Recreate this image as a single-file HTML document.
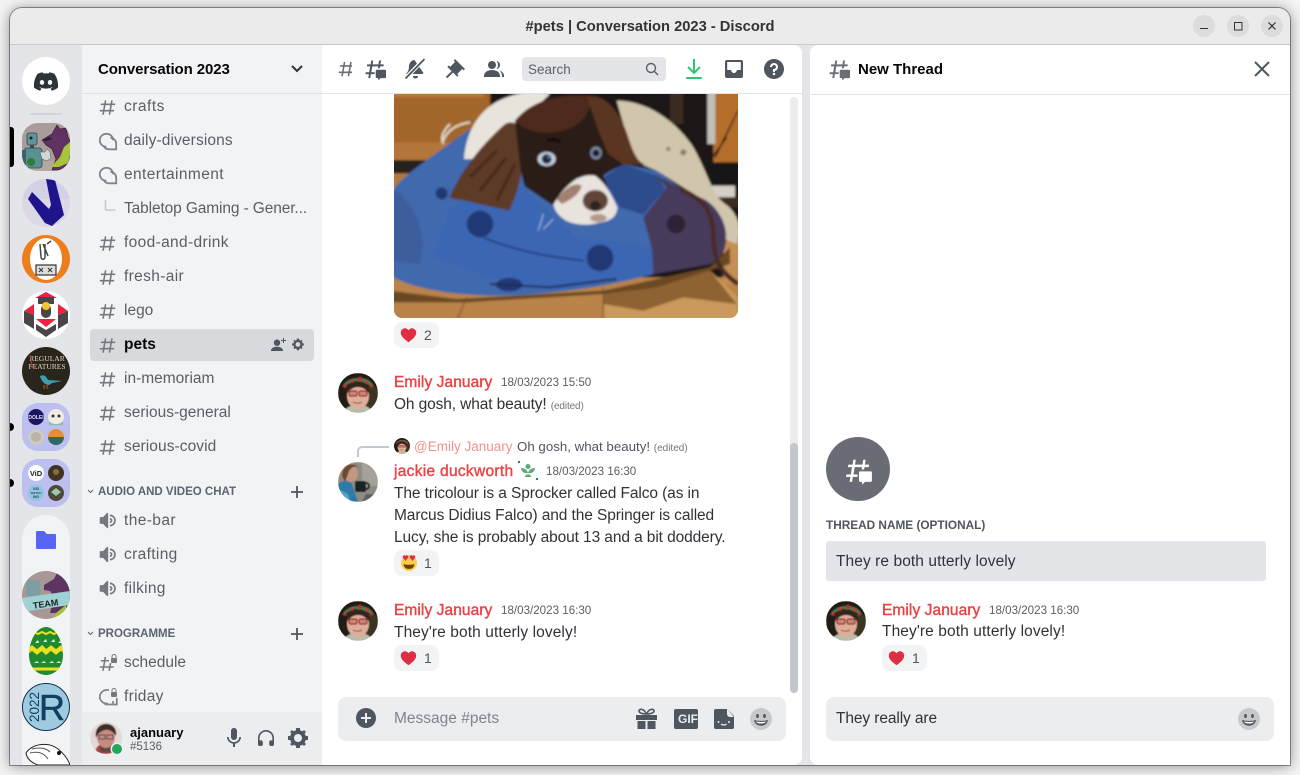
<!DOCTYPE html>
<html lang="en"><head><meta charset="utf-8"><title>#pets | Conversation 2023 - Discord</title>
<style>
html,body{margin:0;padding:0;width:1300px;height:775px;overflow:hidden;background:#f4f4f4;font-family:"Liberation Sans",sans-serif}
#win{position:absolute;left:10px;top:8px;width:1280px;height:757px;border-radius:12px 12px 0 0;box-shadow:0 1px 14px rgba(0,0,0,.45),0 0 0 1px #9a9a9a;background:#e3e5e8}
#g{position:absolute;left:0;top:0}
.t{position:absolute;white-space:nowrap;line-height:20px;height:20px;margin-top:1px}
.c{font-size:15.5px;color:#5c5e66;left:124px}
.cat{font-size:11.5px;font-weight:bold;color:#5c6470;left:98px}
.n{font-size:15.5px;color:#ed4245;-webkit-text-stroke:.4px #ed4245;letter-spacing:.08px}
.d{font-size:11.6px;color:#5c5e66}
.m{font-size:15.5px;color:#2e3338}
.e{font-size:10px;color:#72767d}
.r{font-size:14px;color:#4f5660}
</style></head><body>
<div id="win"></div>
<svg id="g" width="1300" height="775" viewBox="0 0 1300 775" xmlns="http://www.w3.org/2000/svg">
<defs>
<clipPath id="w"><path d="M10 20a12 12 0 0 1 12-12h1256a12 12 0 0 1 12 12v745H10z"/></clipPath>
<clipPath id="cc"><circle cx="20" cy="20" r="20"/></clipPath>
<clipPath id="sc"><circle cx="24" cy="24" r="24"/></clipPath>
<clipPath id="sq"><rect width="48" height="48" rx="16"/></clipPath>
<clipPath id="img"><path d="M394 94h344v216a8 8 0 0 1-8 8H402a8 8 0 0 1-8-8z"/></clipPath>
<filter id="b1" x="-5%" y="-5%" width="110%" height="110%"><feGaussianBlur stdDeviation="3.5"/></filter>
<filter id="b3"><feGaussianBlur stdDeviation=".45"/></filter>
<path id="hash" d="M5.88657 21C5.57547 21 5.3399 20.7189 5.39427 20.4126L6.00001 17H2.59511C2.28449 17 2.04905 16.7198 2.10259 16.4138L2.27759 15.4138C2.31946 15.1746 2.52722 15 2.77011 15H6.35001L7.41001 9H4.00511C3.69449 9 3.45905 8.71977 3.51259 8.41381L3.68759 7.41381C3.72946 7.17456 3.93722 7 4.18011 7H7.76001L8.39677 3.41262C8.43914 3.17391 8.64664 3 8.88907 3H9.87344C10.1845 3 10.4201 3.28107 10.3657 3.58738L9.76001 7H15.76L16.3968 3.41262C16.4391 3.17391 16.6466 3 16.8891 3H17.8734C18.1845 3 18.4201 3.28107 18.3657 3.58738L17.76 7H21.1649C21.4755 7 21.711 7.28023 21.6574 7.58619L21.4824 8.58619C21.4406 8.82544 21.2328 9 20.9899 9H17.41L16.35 15H19.7549C20.0655 15 20.301 15.2802 20.2474 15.5862L20.0724 16.5862C20.0306 16.8254 19.8228 17 19.5799 17H16L15.3632 20.5874C15.3209 20.8261 15.1134 21 14.8709 21H13.8866C13.5755 21 13.3399 20.7189 13.3943 20.4126L14 17H8.00001L7.36325 20.5874C7.32088 20.8261 7.11337 21 6.87094 21H5.88657ZM9.41045 9L8.35045 15H14.3504L15.4104 9H9.41045Z"/>
<path id="spk" d="M11.383 3.07904C11.009 2.92504 10.579 3.01004 10.293 3.29604L6 8.00204H3C2.45 8.00204 2 8.45304 2 9.00204V15.002C2 15.552 2.45 16.002 3 16.002H6L10.293 20.71C10.579 20.996 11.009 21.082 11.383 20.927C11.757 20.772 12 20.407 12 20.002V4.00204C12 3.59904 11.757 3.23204 11.383 3.07904ZM14 5.00195V7.00195C16.757 7.00195 19 9.24595 19 12.002C19 14.759 16.757 17.002 14 17.002V19.002C17.86 19.002 21 15.863 21 12.002C21 8.14295 17.86 5.00195 14 5.00195ZM14 9.00195C15.654 9.00195 17 10.349 17 12.002C17 13.657 15.654 15.002 14 15.002V13.002C14.551 13.002 15 12.553 15 12.002C15 11.451 14.551 11.002 14 11.002V9.00195Z"/>
<path id="gear" fill-rule="evenodd" d="M19.738 10H22V14H19.739C19.498 14.931 19.1 15.798 18.565 16.564L20 18L18 20L16.565 18.564C15.797 19.099 14.932 19.498 14 19.738V22H10V19.738C9.069 19.498 8.203 19.099 7.436 18.564L6 20L4 18L5.436 16.564C4.901 15.799 4.502 14.932 4.262 14H2V10H4.262C4.502 9.068 4.9 8.202 5.436 7.436L4 6L6 4L7.436 5.436C8.202 4.9 9.068 4.502 10 4.262V2H14V4.261C14.932 4.502 15.797 4.9 16.565 5.435L18 3.999L20 5.999L18.564 7.436C19.099 8.202 19.498 9.069 19.738 10ZM12 16C14.2091 16 16 14.2091 16 12C16 9.79086 14.2091 8 12 8C9.79086 8 8 9.79086 8 12C8 14.2091 9.79086 16 12 16Z"/>
<g id="bub" fill="none" stroke="#80848e" stroke-width="1.8"><path d="M8.500 15.800C4.800 15.800 1.800 12.900 1.800 9.200S4.800 2.800 8.500 2.800 15 5.500 15 9.200"/><path d="M12.500 6.800c3.500.2 5.700 3 5.700 6.200v5.300h-7c-2.500 0-4.500-1.200-5.400-3.200"/></g>
<g id="threadh"><path d="M5.4 21l.6-4H2.400l.4-2h3.500l1-6H4l.300-2h3.500l.6-4h2l-.6 4h6l.6-4h2l-.6 4h3.400l-.3 2h-3.400l-.4 2h-2l.4-2h-6l-1 6h3.600l-.4 2H8l-.6 4z"/><path d="M14 12.500h8.500a1 1 0 0 1 1 1v6.500a1 1 0 0 1-1 1h-4.500l-2.500 2.300v-2.300H14a1 1 0 0 1-1-1v-6.500a1 1 0 0 1 1-1z"/></g>
<g id="heart"><path d="M8.500 15.200C3.500 11.500.8 9 .8 5.600.8 3 2.800 1.200 5 1.200c1.500 0 2.700.8 3.500 2.100C9.300 2 10.500 1.200 12 1.200c2.200 0 4.200 1.800 4.200 4.400 0 3.400-2.700 5.900-7.700 9.600z" fill="#dd2e44"/></g>
<g id="smile"><circle cx="11" cy="11" r="11" fill="#c8c9cb"/><ellipse cx="7.500" cy="8" rx="1.400" ry="2" fill="#4f5660"/><ellipse cx="14.500" cy="8" rx="1.400" ry="2" fill="#4f5660"/><path d="M4 11.800c2 1.500 12 1.500 14 0-.4 4-3.500 6-7 6s-6.600-2-7-6z" fill="#4f5660"/><path d="M6 13.500c2 .6 8 .6 10 0-.5 1.300-2 2-5 2s-4.500-.7-5-2z" fill="#fff"/></g>
<g id="emily"><g clip-path="url(#cc)"><g filter="url(#b3)"><rect width="40" height="40" fill="#231c12"/><path d="M28 14h12v26H28z" fill="#3a3420"/><path d="M6 40c1-6 7-8 14-8s13 2 14 8z" fill="#b9bca8"/><ellipse cx="20" cy="23" rx="11" ry="13" fill="#dfae9a"/><path d="M8 22c0-10 5-14 12-14s12 4 12 14c-3-5-7-8-12-8s-9 3-12 8z" fill="#33271a"/><path d="M4 14C8 7 14 5 21 5s13 3 15 9l-5-2-6-3-8-1-7 3z" fill="#477a4d"/><circle cx="7" cy="13" r="1.800" fill="#b92d35"/><circle cx="14" cy="8" r="1.800" fill="#c43340"/><circle cx="22" cy="6" r="2.200" fill="#b92d35"/><circle cx="29" cy="9" r="1.800" fill="#c43340"/><circle cx="33" cy="13" r="1.600" fill="#b92d35"/><rect x="11" y="18" width="8" height="5" rx="1.500" fill="#c48a7a" stroke="#a01f24" stroke-width="1.200"/><rect x="21" y="18" width="8" height="5" rx="1.500" fill="#c48a7a" stroke="#a01f24" stroke-width="1.200"/><path d="M15 29c2 1.500 7 1.500 9 0" stroke="#a85a50" stroke-width="1.200" fill="none"/></g></g></g>
<g id="jackie"><g clip-path="url(#cc)"><g filter="url(#b3)"><rect width="40" height="40" fill="#8d8c84"/><path d="M24 0h16v24H24z" fill="#a3a199"/><path d="M0 0h16v14H0z" fill="#aa8a70"/><path d="M0 22c4-4 12-4 14 0l6 18H0z" fill="#2e7aa8"/><path d="M2 28l8 4 2 8H2z" fill="#55a5c5"/><ellipse cx="13" cy="12" rx="7" ry="8" fill="#c5977f"/><path d="M4 14C4 4 12 0 20 4c-5 0-9 3-10 8l-3 8z" fill="#6a4a35"/><rect x="17" y="19" width="11" height="11" rx="2" fill="#1f2024"/><path d="M28 21c4 0 4 6 0 6" stroke="#1f2024" stroke-width="2" fill="none"/><path d="M28 32h12v8H24z" fill="#5f6066"/></g></g></g>
</defs>
<g clip-path="url(#w)">
<rect x="10" y="8" width="1280" height="36" fill="#ebebeb"/>
<rect x="10" y="44" width="1280" height="1" fill="#c8c8c8"/>
<rect x="10" y="45" width="72" height="720" fill="#e3e5e8"/>
<rect x="82" y="45" width="240" height="720" fill="#f2f3f5"/>
<rect x="82" y="712" width="240" height="53" fill="#ebedef"/>
<path d="M322 45h472a8 8 0 0 1 8 8v704a8 8 0 0 1-8 8H322z" fill="#fff"/>
<path d="M818 45h472v720H818a8 8 0 0 1-8-8V53a8 8 0 0 1 8-8z" fill="#fff"/>
<rect x="82" y="93" width="720" height="1" fill="#e1e2e5"/>
<rect x="810" y="94" width="480" height="1" fill="#e1e2e5"/>
<rect x="6" y="127" width="8" height="40" rx="3" fill="#000"/>
<circle cx="10" cy="427" r="4" fill="#000"/><circle cx="10" cy="483" r="4" fill="#000"/>
</g>
<!-- window controls -->
<circle cx="1204" cy="26" r="11" fill="#dcdcdc"/><circle cx="1238" cy="26" r="11" fill="#dcdcdc"/><circle cx="1272" cy="26" r="11" fill="#dcdcdc"/>
<rect x="1200" y="28" width="8" height="1" fill="#333"/>
<rect x="1234.500" y="22.500" width="7.500" height="7.500" fill="none" stroke="#333" stroke-width="1"/>
<path d="M1268.500 22.500l7 7m0-7l-7 7" stroke="#333" stroke-width="1.200"/>
<!-- rail -->
<circle cx="46" cy="81" r="24" fill="#fff"/>
<svg x="33" y="72" width="26" height="19" viewBox="0 0 28 20"><path fill="#2e3338" d="M23.0212 1.67671C21.3107 0.879656 19.5079 0.318797 17.6584 0C17.4062 0.461742 17.1749 0.934541 16.9708 1.4184C15.003 1.12145 12.9974 1.12145 11.0283 1.4184C10.819 0.934541 10.589 0.461744 10.3368 0.00546311C8.48074 0.324393 6.67795 0.885118 4.96746 1.68231C1.56727 6.77853 0.649666 11.7538 1.11108 16.652C3.10102 18.1418 5.3262 19.2743 7.69177 20C8.22338 19.2743 8.69519 18.4993 9.09812 17.691C8.32996 17.3997 7.58522 17.0424 6.87684 16.6135C7.06531 16.4762 7.24726 16.3387 7.42403 16.1847C11.5911 18.1749 16.408 18.1749 20.5763 16.1847C20.7531 16.3332 20.9351 16.4762 21.1171 16.6135C20.41 17.0369 19.6639 17.3997 18.897 17.691C19.3052 18.4993 19.7718 19.2689 20.3021 19.9945C22.6677 19.2689 24.8929 18.1364 26.8828 16.6466H26.8893C27.43 10.9731 25.9665 6.04728 23.0212 1.67671ZM9.68041 13.6383C8.39754 13.6383 7.34085 12.4453 7.34085 10.994C7.34085 9.54272 8.37155 8.34973 9.68041 8.34973C10.9893 8.34973 12.0395 9.54272 12.0187 10.994C12.0187 12.4453 10.9828 13.6383 9.68041 13.6383ZM18.3161 13.6383C17.0332 13.6383 15.9765 12.4453 15.9765 10.994C15.9765 9.54272 17.0124 8.34973 18.3161 8.34973C19.6184 8.34973 20.6751 9.54272 20.6543 10.994C20.6543 12.4453 19.6184 13.6383 18.3161 13.6383Z"/></svg>
<rect x="30" y="113" width="32" height="2" fill="#d2d5d9"/>
<!-- server 1 robot/dragon -->
<svg x="22" y="123" width="48" height="48" viewBox="0 0 48 48"><g clip-path="url(#sq)"><rect width="48" height="48" fill="#ab9c9c"/><rect y="38" width="48" height="10" fill="#b5a99d"/><rect x="5" y="10" width="10" height="12" rx="2" fill="#5f9599" stroke="#2c4a4e" stroke-width=".8"/><circle cx="9" cy="15" r="1.500" fill="#222"/><rect x="8" y="22" width="4" height="3" fill="#445"/><rect x="2" y="25" width="18" height="20" rx="3" fill="#5a9094" stroke="#2c4a4e" stroke-width=".8"/><circle cx="9" cy="39" r="4" fill="#2f7d38"/><rect x="0" y="27" width="4" height="15" fill="#3f6268"/><path d="M18 29h5l2-3 3 3 1 6-4 3-5-2z" fill="#cfd6d6" stroke="#555" stroke-width=".5"/><path d="M20 17L30 11 35 2 38 6 44 5 46 14 48 18V36L44 47H30L34 36 30 26 24 22Z" fill="#5f3262" stroke="#2b1a2b" stroke-width=".6"/><path d="M48 19L42 24 38 34 29 44H37L46 40 48 32Z" fill="#a8c43a"/><path d="M21 17l7-3 2 2-6 2z" fill="#2b1a2b"/></g></svg>
<!-- server 2 V -->
<svg x="22" y="179" width="48" height="48" viewBox="0 0 48 48"><g clip-path="url(#sc)"><rect width="48" height="48" fill="#dcd8e6"/><rect y="0" width="48" height="20" fill="#cfcbe4" opacity=".6"/><path d="M24 0L33 1 42 36 30 47 23 44 6 20 10 13 27 30 29 26Z" fill="#1e148c"/></g></svg>
<!-- server 3 orange -->
<svg x="22" y="235" width="48" height="48" viewBox="0 0 48 48"><circle cx="24" cy="24" r="24" fill="#ee7d1c"/><ellipse cx="24" cy="24" rx="16" ry="21" fill="#fff"/><path d="M18 9l1 13c0 3 4 3 4 0V9m2 0l4-3m-8 3l5 12" stroke="#444" stroke-width="1.500" fill="none"/><rect x="14" y="30" width="20" height="10" fill="#ddd" stroke="#333" stroke-width="1.200"/><path d="M17 33l4 4m0-4l-4 4m9-4l4 4m0-4l-4 4" stroke="#333"/></svg>
<!-- server 4 red/black -->
<svg x="22" y="291" width="48" height="48" viewBox="0 0 48 48"><circle cx="24" cy="24" r="24" fill="#fff"/><path d="M24 1l11 6H13z" fill="#ef2142"/><rect x="16" y="6" width="16" height="7" fill="#4a4648"/><rect x="19" y="13" width="10" height="14" rx="5" fill="#4a4648"/><circle cx="24" cy="15" r="4" fill="#f5c431"/><path d="M2 20l10-7v11z" fill="#ef2142"/><path d="M2 20l10 4v14L2 32z" fill="#4a4648"/><path d="M46 20l-10-7v11z" fill="#ef2142"/><path d="M46 20l-10 4v14l10-6z" fill="#4a4648"/><path d="M14 28h20l-10 8z" fill="#ef2142"/><path d="M14 33l10 6 10-6v6l-10 7-10-7z" fill="#4a4648"/></svg>
<!-- server 5 Regular Features -->
<svg x="22" y="347" width="48" height="48" viewBox="0 0 48 48"><circle cx="24" cy="24" r="24" fill="#2a251c"/><text x="25" y="14" font-size="7.500" text-anchor="middle" fill="#e6d9bd" font-family="Liberation Serif,serif">REGULAR</text><text x="25" y="22" font-size="7.500" text-anchor="middle" fill="#e6d9bd" font-family="Liberation Serif,serif">FEATURES</text><path d="M18 29c4-2 6 0 8 4l14 1-10 2-3 2c-4 0-8-4-9-9z" fill="#3f9cb0"/><path d="M8 8c2 6 0 10 4 14" stroke="#a5482d" fill="none"/><path d="M22 38v4m3-4v4" stroke="#c2582a"/></svg>
<!-- folder 1 -->
<svg x="22" y="403" width="48" height="48" viewBox="0 0 48 48"><rect width="48" height="48" rx="16" fill="#bdbff0"/><circle cx="14" cy="14" r="8" fill="#1b1560"/><text x="14" y="16" font-size="5" font-weight="bold" text-anchor="middle" fill="#e5e0f5">DOLEI</text><circle cx="34" cy="14" r="8" fill="#f2ede4"/><circle cx="31" cy="13" r="1.500" fill="#333"/><circle cx="37" cy="13" r="1.500" fill="#333"/><path d="M27 18c3 4 11 4 14 0v4h-14z" fill="#8bb9a2"/><circle cx="14" cy="34" r="8" fill="#cfcbc2"/><circle cx="14" cy="34" r="5" fill="#b7b3aa"/><circle cx="34" cy="34" r="8" fill="#e88f36"/><path d="M26 34h16a8 8 0 0 1-16 0z" fill="#2b6a66"/></svg>
<!-- folder 2 -->
<svg x="22" y="459" width="48" height="48" viewBox="0 0 48 48"><rect width="48" height="48" rx="16" fill="#bdbff0"/><circle cx="14" cy="14" r="8" fill="#fff"/><text x="14" y="17" font-size="7.500" font-weight="bold" text-anchor="middle" fill="#222">ViD</text><circle cx="34" cy="14" r="8" fill="#3f3322"/><circle cx="34" cy="13" r="3" fill="#8a6a42"/><circle cx="14" cy="34" r="8" fill="#8ec7d8"/><text x="14" y="31" font-size="4" font-weight="bold" text-anchor="middle" fill="#3b3b7a">VID</text><text x="14" y="35" font-size="3" font-weight="bold" text-anchor="middle" fill="#3b3b7a">WATCH</text><text x="14" y="39" font-size="3.500" font-weight="bold" text-anchor="middle" fill="#3b3b7a">ING</text><circle cx="34" cy="34" r="8" fill="#4d4a38"/><path d="M29 33l5-4 5 4-5 4z" fill="#9fc8b0"/></svg>
<!-- expanded folder -->
<path d="M22 539a24 24 0 0 1 48 0v226H22z" fill="#f2f3f5"/>
<path d="M36 532a1 1 0 0 1 1-1h7l3 3h8a1 1 0 0 1 1 1v13a1 1 0 0 1-1 1H37a1 1 0 0 1-1-1z" fill="#5865f2"/>
<svg x="22" y="571" width="48" height="48" viewBox="0 0 48 48"><g clip-path="url(#sc)"><rect width="48" height="48" fill="#a79797"/><rect x="4" y="9" width="14" height="16" rx="3" fill="#7d9ea3"/><path d="M22 14l10-6 4-8 12 6v36H28l4-16-4-6-6-1z" fill="#5d3460"/><path d="M-1 27L48 20v14L0 41z" fill="#9fd2d4"/><text x="24" y="36" font-size="9" font-weight="bold" text-anchor="middle" fill="#222" transform="rotate(-8 24 36)">TEAM</text><path d="M34 42l10-8v14H30z" fill="#a5c335"/></g></svg>
<svg x="22" y="627" width="48" height="48" viewBox="0 0 48 48"><clipPath id="egg"><path d="M24 0c9 0 17 13 17 28 0 12-8 20-17 20S7 40 7 28C7 13 15 0 24 0z"/></clipPath><g clip-path="url(#egg)"><rect width="48" height="48" fill="#1f8a2e"/><path d="M8 7l4-2 4 2 4-2 4 2 4-2 4 2 4-2 4 2" stroke="#ece021" stroke-width="2" fill="none"/><path d="M5 25l5-4 5 4 5-4 4 4 5-4 5 4 5-4 5 4" stroke="#ece021" stroke-width="4.500" fill="none"/><path d="M5 42h40" stroke="#ece021" stroke-width="3"/><g fill="#e9efe6"><path d="M13 16l3-3 1 3zM21 15l3-3 1 3zM29 15l3-3 1 3zM36 16l3-3 1 3zM12 36l3-2 2 2zM19 36l3-2 2 2zM27 36l3-2 2 2zM34 36l3-2 2 2z"/></g></g></svg>
<svg x="22" y="683" width="48" height="48" viewBox="0 0 48 48"><circle cx="24" cy="24" r="23.500" fill="#9fcbe0" stroke="#0f2f4a"/><text x="0" y="0" font-size="13.500" fill="#123f60" text-anchor="middle" transform="translate(17 24) rotate(-90)">2022</text><text x="30" y="37" font-size="36" fill="#123f60" stroke="#123f60" stroke-width=".5" text-anchor="middle">R</text></svg>
<svg x="22" y="739" width="48" height="26" viewBox="0 0 48 26"><path d="M4 14C10 5 26 2 36 10c5 4 10 10 12 16H16C10 24 5 20 4 14z" fill="#fff" stroke="#222" stroke-width="1"/><path d="M8 14c8-2 14 0 18 6M10 10c8-2 14-1 18 3" stroke="#555" fill="none"/><circle cx="37" cy="14" r="2" fill="#111"/></svg>
<!-- sidebar header chevron -->
<path d="M292 66l5 5 5-5" stroke="#2e3338" stroke-width="2" fill="none"/>
<!-- selected -->
<rect x="90" y="329" width="224" height="32" rx="4" fill="#d7d9dd"/>
<!-- channel icons -->
<g fill="#747980">
<use href="#hash" transform="translate(98 97.900) scale(.8)"/>
<use href="#hash" transform="translate(98 233.900) scale(.8)"/>
<use href="#hash" transform="translate(98 267.900) scale(.8)"/>
<use href="#hash" transform="translate(98 301.900) scale(.8)"/>
<use href="#hash" transform="translate(98 335.900) scale(.8)"/>
<use href="#hash" transform="translate(98 369.900) scale(.8)"/>
<use href="#hash" transform="translate(98 403.900) scale(.8)"/>
<use href="#hash" transform="translate(98 437.900) scale(.8)"/>
<use href="#spk" transform="translate(98 510.300) scale(.85)"/>
<use href="#spk" transform="translate(98 544.300) scale(.85)"/>
<use href="#spk" transform="translate(98 578.300) scale(.85)"/>
</g>
<use href="#bub" transform="translate(98 131)"/>
<use href="#bub" transform="translate(98 165)"/>
<path d="M105.500 200v9a1 1 0 0 0 1 1h9" fill="none" stroke="#c4c9ce" stroke-width="1.500"/>
<g fill="#4f5660"><path d="M277 339.500a3.200 3.200 0 1 1 0 6.400 3.200 3.200 0 0 1 0-6.400zM271 351c0-3 2.500-4.300 6-4.300s6 1.300 6 4.300z"/><path d="M283 338h1v2h2v1h-2v2h-1v-2h-2v-1h2z"/></g>
<use href="#gear" fill="#4f5660" transform="translate(291 337.500) scale(.58)"/>
<!-- category -->
<path d="M88 490l2.500 2.500 2.500-2.500" stroke="#5c6470" stroke-width="1" fill="none"/>
<path d="M88 632l2.500 2.500 2.500-2.500" stroke="#5c6470" stroke-width="1" fill="none"/>
<path d="M297 486v12m-6-6h12M297 628v12m-6-6h12" stroke="#4f5660" stroke-width="1.800"/>
<!-- schedule locked -->
<g fill="#747980"><use href="#hash" transform="translate(98 654.500) scale(.78)"/></g>
<rect x="109" y="653" width="9" height="10" fill="#f2f3f5"/>
<g fill="#747980"><rect x="111" y="658" width="6" height="5" rx="1"/><path d="M112 658v-1.500a2 2 0 0 1 4 0V658" stroke="#747980" fill="none"/></g>
<path d="M109 690h-2c-4 0-7.200 3-7.200 6.800s3.200 6.700 7.200 6.700h1M113 701v3.500h-6c-1.500 0-2.700-1-3.200-2M116.800 698v6.500H113" fill="none" stroke="#80848e" stroke-width="1.700"/><rect x="111" y="692" width="6" height="5" rx="1" fill="#747980"/><path d="M112 692v-1.500a2 2 0 0 1 4 0V692" stroke="#747980" fill="none"/>
<!-- user panel -->
<svg x="90" y="722" width="32" height="32" viewBox="0 0 32 32"><clipPath id="u"><circle cx="16" cy="16" r="16"/></clipPath><g clip-path="url(#u)"><g filter="url(#b3)"><rect width="32" height="32" fill="#e5d8d5"/><path d="M5 32c0-8 6-11 11-11s13 3 13 11z" fill="#a44"/><ellipse cx="16" cy="15" rx="9" ry="11" fill="#c88b80"/><path d="M6 16C4 5 12 1 18 2s9 6 8 12c-3-5-8-7-11-6-4 1-7 3-9 8z" fill="#3c2f2a"/><rect x="9" y="13" width="6" height="4" fill="none" stroke="#444"/><rect x="17" y="13" width="6" height="4" fill="none" stroke="#444"/><path d="M9 23c3 4 10 4 14 0l-2 7h-10z" fill="#5a4a42"/></g></g></svg>
<circle cx="117" cy="749" r="6.500" fill="#ebedef"/><circle cx="117" cy="749" r="5" fill="#23a55a"/>
<g fill="#4f5660"><path transform="translate(222 726)" d="M14.990 11C14.990 12.660 13.660 14 12 14C10.340 14 9 12.660 9 11V5C9 3.340 10.340 2 12 2C13.660 2 15 3.340 15 5L14.990 11ZM12 16.100C14.760 16.100 17.300 14 17.300 11H19C19 14.420 16.280 17.240 13 17.720V21H11V17.720C7.720 17.230 5 14.410 5 11H6.700C6.700 14 9.240 16.100 12 16.100Z"/>
<path transform="translate(256.400 728.400) scale(.8)" d="M12 2.003C6.486 2.003 2 6.488 2 12.003V20.003C2 21.107 2.895 22.003 4 22.003H6C7.104 22.003 8 21.107 8 20.003V17.003C8 15.899 7.104 15.003 6 15.003H4V12.003C4 7.591 7.589 4.003 12 4.003C16.411 4.003 20 7.591 20 12.003V15.003H18C16.896 15.003 16 15.899 16 17.003V20.003C16 21.107 16.896 22.003 18 22.003H20C21.104 22.003 22 21.107 22 20.003V12.003C22 6.488 17.514 2.003 12 2.003Z"/>
<use href="#gear" transform="translate(286 726)"/></g>
<!-- header main -->
<g fill="#4f5660">
<use href="#hash" transform="translate(337 59.500) scale(.8)" fill="#6a6f76"/>
<rect x="352" y="56" width="6" height="26" fill="#fff"/>
<use href="#threadh" transform="translate(363 57.500) scale(.98)"/>
<g transform="translate(403 57)"><path d="M12 3c-3.800 0-6 3-6 6.500 0 3.500-1.500 6-3 7.500h16.500l1-1-9-13z M10 19c0 1.600 1 2.500 2.500 2.500S15 20.600 15 19z"/><path d="M3 21L21 2" stroke="#fff" stroke-width="4"/><path d="M2.500 21.500L21.500 2" stroke="#4f5660" stroke-width="1.800"/></g>
<path transform="translate(443 57)" d="M22 12L12.101 2.101L10.686 3.514L12.101 4.929L7.151 9.878V9.880L5.736 8.465L4.322 9.880L8.565 14.122L2.908 19.778L4.322 21.192L9.979 15.536L14.222 19.778L15.636 18.364L14.222 16.950L19.171 12H19.172L20.586 13.414L22 12Z"/>
<g transform="translate(482 57)"><path d="M14 8.006C14 10.211 12.206 12.006 10 12.006C7.795 12.006 6 10.211 6 8.006C6 5.801 7.794 4.006 10 4.006C12.206 4.006 14 5.801 14 8.006ZM2 19.006C2 15.473 5.290 13.006 10 13.006C14.711 13.006 18 15.473 18 19.006V20.006H2V19.006Z"/><path d="M20 20.006H22V19.006C22 16.443 20.270 14.442 17.521 13.535C19.062 14.913 20 16.806 20 19.006V20.006Z"/><path d="M14.883 11.908C16.666 11.504 18 9.908 18 8.006C18 5.969 16.469 4.282 14.497 4.037C15.432 5.095 16 6.485 16 8.006C16 9.449 15.489 10.774 14.638 11.810C14.720 11.842 14.802 11.874 14.883 11.908Z"/></g>
</g>
<rect x="522" y="57" width="144" height="24" rx="4" fill="#e3e5e8"/>
<circle cx="651" cy="68" r="4.500" fill="none" stroke="#5c5e66" stroke-width="1.400"/><path d="M654.500 71.500l3.500 3.500" stroke="#5c5e66" stroke-width="1.400"/>
<path d="M694 59v14m-6-6l6 6 6-6" fill="none" stroke="#2dc770" stroke-width="2"/><rect x="686" y="77" width="16" height="2" rx="1" fill="#2dc770"/>
<path d="M727 60h14a2 2 0 0 1 2 2v14a2 2 0 0 1-2 2h-14a2 2 0 0 1-2-2V62a2 2 0 0 1 2-2z" fill="#4f5660"/><path d="M727.200 62h13.600v8h-4c0 1.700-1.300 3-2.800 3s-2.800-1.300-2.800-3h-4z" fill="#fff"/>
<path transform="translate(762 57)" fill="#4f5660" fill-rule="evenodd" d="M12 2C6.486 2 2 6.487 2 12C2 17.515 6.486 22 12 22C17.514 22 22 17.515 22 12C22 6.487 17.514 2 12 2ZM12 18.250C11.310 18.250 10.750 17.691 10.750 17C10.750 16.310 11.310 15.750 12 15.750C12.690 15.750 13.250 16.310 13.250 17C13.250 17.691 12.690 18.250 12 18.250ZM13 13.875V15H11V12H12C13.104 12 14 11.103 14 10C14 8.896 13.104 8 12 8C10.896 8 10 8.896 10 10H8C8 7.795 9.795 6 12 6C14.205 6 16 7.795 16 10C16 11.861 14.723 13.429 13 13.875Z"/>
<!-- dog image -->
<g clip-path="url(#img)"><svg x="394" y="94" width="344" height="224" viewBox="12 10 1032 672">
<g filter="url(#b1)">
<rect x="-40" y="-40" width="1140" height="780" fill="#1c1513"/>
<!-- background -->
<rect x="-40" y="-40" width="340" height="200" fill="#a2652a"/><rect x="-40" y="-40" width="320" height="60" fill="#b87a3a"/>
<rect x="-40" y="155" width="250" height="55" fill="#b5763a"/><rect x="-40" y="208" width="240" height="42" fill="#26201c"/><rect x="-40" y="248" width="140" height="60" fill="#b27a3c"/>
<rect x="970" y="-40" width="130" height="270" fill="#b56d2c"/><rect x="840" y="-40" width="40" height="140" fill="#3a2a20"/><rect x="952" y="-40" width="24" height="200" fill="#c0c0ba"/>
<rect x="940" y="215" width="160" height="65" fill="#171515"/><rect x="965" y="285" width="70" height="35" fill="#d5cfc4"/><rect x="940" y="320" width="160" height="30" fill="#3a2a20"/>
<path d="M1010 140L960 210M1044 60L975 200" stroke="#141214" stroke-width="4"/>
<rect x="-40" y="560" width="1140" height="180" fill="#b98349"/>
<rect x="1000" y="450" width="100" height="130" fill="#c58f55"/>
<path d="M640 600L960 540 1044 620V700H640z" fill="#c99a5c"/>
<path d="M640 610L960 540 1040 640 880 620 760 660 640 640z" fill="#8e6230"/>
<path d="M0 600L200 625 640 600 960 530 1020 470V520L800 590 640 610 230 635H0z" fill="#6b4a22"/>
<path d="M230 620L200 690M640 590V690" stroke="#6e4a25" stroke-width="3"/>
<!-- body -->
<path d="M680 30C760 30 850 80 910 170 955 250 965 310 1005 340 1044 365 1060 420 1040 460L1000 445 960 340 880 290 800 240 740 215 700 100z" fill="#d2c5ad"/>
<circle cx="880" cy="185" r="9" fill="#8c7c62"/><circle cx="835" cy="175" r="6" fill="#8c7c62"/>
<!-- bag -->
<path d="M238 115C140 190 40 250 12 295-20 340-20 540 12 562 90 600 220 618 350 615 480 610 650 590 790 550L960 520C990 505 1010 480 1008 440 1010 400 985 355 950 330L870 290 800 240 700 220 500 200 300 180z" fill="#4169ae"/>
<path d="M12 295C60 330 120 420 90 520L12 510z" fill="#3d5d9c"/>
<path d="M180 350L400 290 560 440 790 470 790 550 500 595 300 560 130 500z" fill="#3b66b4"/>
<path d="M790 250L870 290 950 330C985 355 1010 400 1008 440 1010 480 990 505 960 520L790 550 785 470 760 380 830 290z" fill="#463b5c"/>
<path d="M640 262L700 220 800 255 825 295 760 372 690 350 660 300z" fill="#2f4c8c"/>
<!-- neck fur -->
<path d="M222 205C228 120 270 50 345 22 400 0 450 0 480 10L400 85 330 140 260 205z" fill="#e8e4dc"/>
<!-- ear L -->
<path d="M178 322C205 255 265 170 345 100 375 85 400 105 402 170 400 240 385 305 358 360L300 348 235 332z" fill="#5d3a28"/>
<path d="M240 260L320 180M270 300L350 200M320 330L375 220" stroke="#4a2b1d" stroke-width="10" fill="none"/>
<!-- head -->
<path d="M375 90C420 40 490 10 560 10 620 15 650 80 680 150L722 210C700 225 665 235 640 255L660 310 560 260 490 345 404 287 392 240z" fill="#2b1a17"/>
<path d="M375 90C420 35 490 10 600 15 610 70 560 120 490 125 450 130 410 125 375 90z" fill="#4e2c1f"/>
<!-- ear R -->
<path d="M590 18C640 5 690 60 715 140 730 190 745 215 765 222L700 222 655 190 625 120z" fill="#5a3524"/>
<!-- snout -->
<path d="M490 342C520 290 565 245 615 255 650 280 668 320 682 350 680 380 660 392 625 396 600 405 555 405 525 388 505 375 495 360 490 342z" fill="#e9e3de"/>
<path d="M500 325C520 300 550 270 575 285 570 310 540 330 515 340z" fill="#a08070"/>
<ellipse cx="616" cy="330" rx="38" ry="32" fill="#5f4438"/>
<ellipse cx="616" cy="345" rx="16" ry="14" fill="#2e2320"/>
<ellipse cx="625" cy="382" rx="25" ry="12" fill="#b39a8a"/>
<!-- eyes -->
<ellipse cx="470" cy="205" rx="27" ry="21" fill="#c6d2de"/><circle cx="470" cy="205" r="15" fill="#1f2a40"/><circle cx="476" cy="199" r="3" fill="#9fb4d0"/>
<ellipse cx="618" cy="187" rx="17" ry="19" fill="#7d8ea6"/><circle cx="618" cy="187" r="11" fill="#231d26"/>
<path d="M470 150c15-5 30-5 40 5" stroke="#160e0c" stroke-width="10" fill="none"/>
<!-- pattern -->
<g fill="#20316a" opacity=".85"><circle cx="630" cy="502" r="40"/><circle cx="270" cy="400" r="40"/><ellipse cx="358" cy="582" rx="40" ry="20"/><circle cx="155" cy="308" r="18"/></g>
<circle cx="858" cy="400" r="28" fill="#2d2436"/>
<path d="M870 295C950 330 970 370 970 440 972 520 1000 550 1044 580" fill="none" stroke="#4a2a25" stroke-width="14"/>
<path d="M300 580L480 590 680 565" stroke="#1d2b55" stroke-width="6" fill="none"/>
<path d="M280 440C400 490 500 500 580 510" stroke="#233a70" stroke-width="5" fill="none"/>
<path d="M180 100C160 120 150 140 160 160M240 95C200 100 170 120 160 150" stroke="#e4dcc8" stroke-width="6" fill="none"/>
<path d="M460 370l-15 50M490 385l-30 30" stroke="#cfd8ea" stroke-width="2"/>
</g>
</svg></g>
<!-- reactions -->
<g fill="#f2f3f5"><rect x="394" y="322" width="45" height="26" rx="8"/><rect x="394" y="550" width="45" height="26" rx="8"/><rect x="394" y="645" width="45" height="26" rx="8"/><rect x="882" y="645" width="45" height="26" rx="8"/></g>
<use href="#heart" transform="translate(400 327)"/><use href="#heart" transform="translate(400 650)"/><use href="#heart" transform="translate(888 650)"/>
<circle cx="409" cy="563" r="8" fill="#ffcc4d"/><path d="M403.500 564c3 1 8 1 11 0-.5 3.500-2.500 5-5.500 5s-5-1.500-5.500-5z" fill="#664500"/><path d="M404 559c-3-2.500 0-5 1.500-3 1.500-2 4.500.5 1.500 3l-1.500 2zM411 559c-3-2.500 0-5 1.500-3 1.500-2 4.500.5 1.500 3l-1.500 2z" fill="#dd2e44"/>
<!-- avatars -->
<use href="#emily" transform="translate(338 373)"/>
<use href="#jackie" transform="translate(338 462)"/>
<use href="#emily" transform="translate(338 601)"/>
<use href="#emily" transform="translate(826 601)"/>
<use href="#emily" transform="translate(394 438) scale(.4)"/>
<path d="M358 457v-6a4 4 0 0 1 4-4h27" fill="none" stroke="#c4c9ce" stroke-width="2"/>
<!-- badge -->
<g fill="#5ea878"><path d="M528 473c-1-3-3-5-7-5 0 3 3 6 7 5zm0 0c1-3 3-5 7-5 0 3-3 6-7 5z"/><circle cx="528" cy="466.500" r="2.500"/><path d="M528 474.500c-2 0-3 1-3 2.500h6c0-1.500-1-2.500-3-2.500z"/></g>
<rect x="518" y="461" width="2" height="2" fill="#1e8a4e"/><rect x="536" y="478" width="2" height="2" fill="#1e8a4e"/>
<!-- scrollbar -->
<rect x="790" y="97" width="8" height="596" rx="4" fill="#ebedef"/>
<rect x="790" y="443" width="8" height="250" rx="4" fill="#c1c7cc"/>
<!-- input -->
<rect x="338" y="697" width="448" height="44" rx="8" fill="#ebedef"/>
<circle cx="366" cy="718" r="10" fill="#4f5660"/><path d="M366 713v10m-5-5h10" stroke="#ebedef" stroke-width="2"/>
<g fill="#4f5660"><path d="M636 715h21v5h-21zM637.500 721h8v8h-8zM647.500 721h8v8h-8z"/><path d="M646 714c-1-5-7-6-7-3 0 2 4 3 7 3zm1 0c1-5 7-6 7-3 0 2-4 3-7 3z" fill="none" stroke="#4f5660" stroke-width="1.600"/>
<rect x="674" y="709" width="24" height="20" rx="2"/>
<path d="M716 709h11l7 7v11a2 2 0 0 1-2 2h-16a2 2 0 0 1-2-2v-16a2 2 0 0 1 2-2z"/></g>
<path d="M727 709v5a3 3 0 0 0 3 3h4z" fill="#ebedef"/><circle cx="718.500" cy="722" r="1" fill="#ebedef"/><circle cx="729" cy="722" r="1" fill="#ebedef"/><path d="M721 724c1.500 1.300 4 1.300 5.500 0" stroke="#ebedef" fill="none" stroke-width="1.200"/>
<use href="#smile" transform="translate(750 708)"/>
<!-- thread header -->
<use href="#threadh" fill="#6a6f76" transform="translate(827 57.500) scale(.98)"/>
<path d="M1255 62l14 14m0-14l-14 14" stroke="#4f5660" stroke-width="2"/>
<circle cx="858" cy="469" r="32" fill="#696c75"/>
<use href="#threadh" fill="#fff" transform="translate(843 456) scale(1.230)"/>
<rect x="826" y="541" width="440" height="40" rx="3" fill="#e3e5e8"/>
<rect x="826" y="697" width="448" height="44" rx="8" fill="#ebedef"/>
<use href="#smile" transform="translate(1238 708)"/>
</svg>
<div class="t" style="left:0;width:1300px;text-align:center;top:16px;font-size:14.700px;font-weight:bold;color:#333">#pets | Conversation 2023 - Discord</div>
<div class="t" style="left:98px;top:59px;font-size:15px;font-weight:bold;color:#060607;letter-spacing:-.1px">Conversation 2023</div>
<div class="t c" style="top:96px;letter-spacing:.5px">crafts</div>
<div class="t c" style="top:130px;letter-spacing:.12px">daily-diversions</div>
<div class="t c" style="top:164px;letter-spacing:.4px">entertainment</div>
<div class="t c" style="top:198px;letter-spacing:-.12px">Tabletop Gaming - Gener...</div>
<div class="t c" style="top:232px;letter-spacing:.35px">food-and-drink</div>
<div class="t c" style="top:266px;letter-spacing:.35px">fresh-air</div>
<div class="t c" style="top:300px">lego</div>
<div class="t c" style="top:334px;color:#060607;font-weight:bold">pets</div>
<div class="t c" style="top:368px">in-memoriam</div>
<div class="t c" style="top:402px">serious-general</div>
<div class="t c" style="top:436px;letter-spacing:.08px">serious-covid</div>
<div class="t cat" style="top:481px">AUDIO AND VIDEO CHAT</div>
<div class="t c" style="top:510px;letter-spacing:.4px">the-bar</div>
<div class="t c" style="top:544px;letter-spacing:.35px">crafting</div>
<div class="t c" style="top:578px;letter-spacing:.3px">filking</div>
<div class="t cat" style="top:623px">PROGRAMME</div>
<div class="t c" style="top:652px">schedule</div>
<div class="t c" style="top:686px;letter-spacing:.3px">friday</div>
<div class="t" style="left:130px;top:722px;font-size:13px;font-weight:bold;color:#060607">ajanuary</div>
<div class="t" style="left:130px;top:736px;font-size:11.500px;color:#5c5e66">#5136</div>
<div class="t" style="left:528px;top:59px;font-size:13.500px;color:#5c5e66">Search</div>
<div class="t r" style="left:424px;top:324px">2</div>
<div class="t n" style="left:394px;top:372px">Emily January</div>
<div class="t d" style="left:501px;top:372px">18/03/2023 15:50</div>
<div class="t m" style="left:394px;top:394px;letter-spacing:-.12px">Oh gosh, what beauty! <span class="e">(edited)</span></div>
<div class="t" style="left:414px;top:436px;font-size:13.500px;color:#f0938f">@Emily January</div>
<div class="t" style="left:517px;top:436px;font-size:13.300px;color:#4f5660">Oh gosh, what beauty! <span class="e">(edited)</span></div>
<div class="t n" style="left:394px;top:461px;letter-spacing:.3px">jackie duckworth</div>
<div class="t d" style="left:546px;top:461px">18/03/2023 16:30</div>
<div class="t m" style="left:394px;top:483px;letter-spacing:-.1px">The tricolour is a Sprocker called Falco (as in</div>
<div class="t m" style="left:394px;top:505px;letter-spacing:-.1px">Marcus Didius Falco) and the Springer is called</div>
<div class="t m" style="left:394px;top:527px;letter-spacing:-.1px">Lucy, she is probably about 13 and a bit doddery.</div>
<div class="t r" style="left:424px;top:552px">1</div>
<div class="t n" style="left:394px;top:600px">Emily January</div>
<div class="t d" style="left:501px;top:600px">18/03/2023 16:30</div>
<div class="t m" style="left:394px;top:622px;letter-spacing:.1px">They're both utterly lovely!</div>
<div class="t r" style="left:424px;top:647px">1</div>
<div class="t" style="left:394px;top:708px;font-size:15.500px;color:#80848e">Message #pets</div>
<div class="t" style="left:678px;top:708px;font-size:12px;font-weight:bold;color:#ebedef">GIF</div>
<div class="t" style="left:858px;top:59px;font-size:15px;font-weight:bold;color:#060607">New Thread</div>
<div class="t" style="left:826px;top:514px;font-size:11.800px;font-weight:bold;color:#4f5660">THREAD NAME (OPTIONAL)</div>
<div class="t m" style="left:836px;top:551px;letter-spacing:.08px">They re both utterly lovely</div>
<div class="t n" style="left:882px;top:600px">Emily January</div>
<div class="t d" style="left:989px;top:600px">18/03/2023 16:30</div>
<div class="t m" style="left:882px;top:621px;letter-spacing:.1px">They're both utterly lovely!</div>
<div class="t r" style="left:912px;top:647px">1</div>
<div class="t m" style="left:836px;top:708px;letter-spacing:-.1px">They really are</div>
</body></html>
